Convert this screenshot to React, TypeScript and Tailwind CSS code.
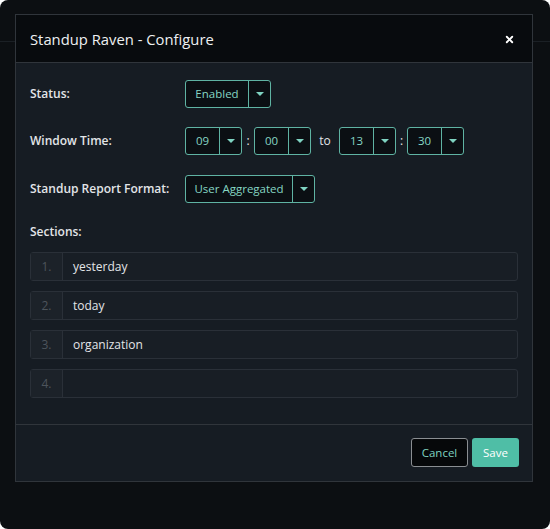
import { X } from "lucide-react";

function Caret() {
  return (
    <svg width="8" height="4" viewBox="0 0 8 4" className="fill-[#7fd3c1]">
      <path d="M0 0h8L4 4z" />
    </svg>
  );
}

function Select({ value, textW }: { value: string; textW: string }) {
  return (
    <div className="flex h-[28px] rounded-[3px] border border-[#5fb3a3] bg-[#0b0f13] text-[11.5px] font-normal text-[#86d6c4]">
      <div className={`${textW} flex items-center justify-center border-r border-[#5fb3a3]`}>{value}</div>
      <div className="flex w-[21px] items-center justify-center">
        <Caret />
      </div>
    </div>
  );
}

const sections = ["yesterday", "today", "organization", ""];

export default function App() {
  return (
    <div className="h-[529px] w-[550px] bg-white font-['Open_Sans',sans-serif]">
      <div className="relative h-full w-full overflow-hidden rounded-[8px] bg-[#0c0f12] pt-[14px] pl-[15px]">
        <div className="absolute left-0 right-0 top-[41px] h-px bg-[#1b2025]" />
        <div className="relative w-[518px] border border-[#30353b] bg-[#161c23]">
          <div className="flex h-[48px] items-center justify-between border-b border-[#30353b] bg-[#080b0e] pt-[2px] pl-[14px] pr-[17px]">
            <h1 className="text-[14.8px] text-[#eef0f2]">Standup Raven - Configure</h1>
            <X className="h-[11px] w-[11px] text-white" strokeWidth={4} />
          </div>

          <div className="flex flex-col px-[14px] pt-[17px] pb-[26px] text-[12px] font-semibold text-[#e3e5e8]">
            <div className="flex items-center">
              <div className="w-[155px]">Status:</div>
              <Select value="Enabled" textW="w-[63px]" />
            </div>

            <div className="mt-[19px] flex items-center">
              <div className="w-[155px]">Window Time:</div>
              <Select value="09" textW="w-[34px]" />
              <span className="w-[12px] text-center font-normal">:</span>
              <Select value="00" textW="w-[34px]" />
              <span className="w-[28px] text-center font-normal">to</span>
              <Select value="13" textW="w-[34px]" />
              <span className="w-[11px] text-center font-normal">:</span>
              <Select value="30" textW="w-[34px]" />
            </div>

            <div className="mt-[20px] flex items-center">
              <div className="w-[155px]">Standup Report Format:</div>
              <Select value="User Aggregated" textW="w-[107px]" />
            </div>

            <div className="mt-[20px]">Sections:</div>

            <div className="mt-[11px] flex flex-col gap-[10px] font-normal">
              {sections.map((s, i) => (
                <div key={i} className="flex h-[29px] rounded-[3px] border border-[#2a3038] bg-[#181e25]">
                  <div className="flex w-[32px] items-center justify-center border-r border-[#2a3038] bg-[#1c2229] text-[#4d545c]">
                    {i + 1}.
                  </div>
                  <div className="flex flex-1 items-center pl-[10px] text-[#e3e5e8]">{s}</div>
                </div>
              ))}
            </div>
          </div>

          <div className="flex justify-end gap-[4px] border-t border-[#30353b] pt-[13px] pb-[14px] pr-[13px] text-[11.5px]">
            <button className="h-[29px] w-[57px] rounded-[3px] border border-[#8a8e92] bg-[#06080a] text-[#7fd3c1]">
              Cancel
            </button>
            <button className="h-[29px] w-[47px] rounded-[3px] bg-[#4fbea6] text-white">Save</button>
          </div>
        </div>
      </div>
    </div>
  );
}
